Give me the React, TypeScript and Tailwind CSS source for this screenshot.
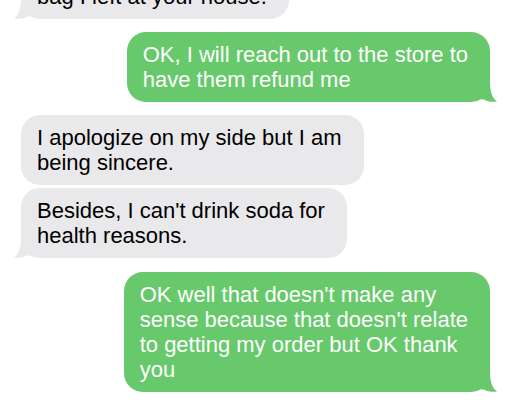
import React from "react";

type Msg = { from: "me" | "them"; lines: string[]; tail?: boolean; className?: string };

const messages: Msg[] = [
  { from: "them", lines: ["bag I left at your house."], tail: true, className: "-mt-[26px] w-[367px]" },
  { from: "me", lines: ["OK, I will reach out to the store to", "have them refund me"], tail: true, className: "mt-[13px]" },
  { from: "them", lines: ["I apologize on my side but I am", "being sincere."], className: "mt-[13px]" },
  { from: "them", lines: ["Besides, I can't drink soda for", "health reasons."], tail: true, className: "mt-[3px]" },
  {
    from: "me",
    lines: [
      "OK well that doesn't make any",
      "sense because that doesn't relate",
      "to getting my order but OK thank",
      "you"
    ],
    tail: true,
    className: "mt-[14px]"
  }
];

function Tail({ side, color }: { side: "left" | "right"; color: string }) {
  if (side === "right") {
    return (
      <svg
        className="absolute bottom-0 right-[-7px]"
        width="16"
        height="20"
        viewBox="0 0 16 20"
      >
        <path d="M0 0 H9 C9 9 11 16 16 19.6 C11 20.4 6 19.2 3 17.4 C2 17.6 1 17.6 0 17.6 Z" fill={color} />
      </svg>
    );
  }
  return (
    <svg className="absolute bottom-0 left-[-7px]" width="16" height="20" viewBox="0 0 16 20">
      <path d="M16 0 H7 C7 9 5 16 0 19.6 C5 20.4 10 19.2 13 17.4 C14 17.6 15 17.6 16 17.6 Z" fill={color} />
    </svg>
  );
}

function Bubble({ msg }: { msg: Msg }) {
  const me = msg.from === "me";
  return (
    <div
      className={
        (me
          ? "self-end bg-[#67c96b] text-white "
          : "self-start bg-[#e9e9eb] text-black ") +
        "relative w-fit rounded-[19px] py-[10px] pl-4 pr-[22px] text-[22px] leading-[25px] " +
        (msg.className ?? "")
      }
    >
      {msg.lines.map((line, i) => (
        <div key={i} className="whitespace-nowrap">
          {line}
        </div>
      ))}
      {msg.tail && <Tail side={me ? "right" : "left"} color={me ? "#67c96b" : "#e9e9eb"} />}
    </div>
  );
}

export default function App() {
  return (
    <div className="h-[409px] w-[512px] overflow-hidden bg-white font-['Liberation_Sans',Arial,sans-serif]">
      <div className="flex flex-col pl-[21px] pr-[22px]">
        {messages.map((m, i) => (
          <Bubble key={i} msg={m} />
        ))}
      </div>
    </div>
  );
}
